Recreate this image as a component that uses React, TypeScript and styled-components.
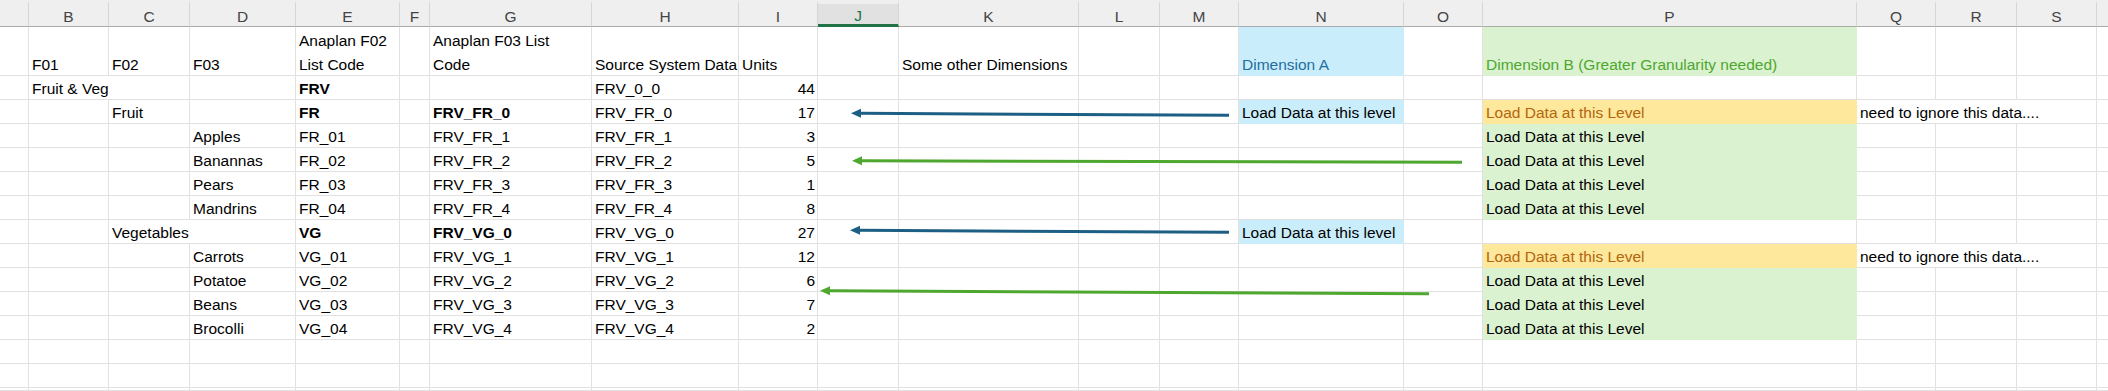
import React from "react";
import styled, { createGlobalStyle } from "styled-components";

const GlobalStyle = createGlobalStyle`
    html, body {
        margin: 0;
        padding: 0;
        background: #ffffff;
        overflow: hidden;
    }
    body {
        font-family: "Liberation Sans", Arial, sans-serif;
    }
`;

const GRID = "#E1E1E1";

const FILLS = {
    blue: "#CAEDFB",
    green: "#DAF2D0",
    yellow: "#FEE89B",
};

const TONES = {
    blue: "#1F6FA0",
    green: "#4EA72E",
    orange: "#B4650E",
};

type Fill = keyof typeof FILLS;
type Tone = keyof typeof TONES;

type CellSpec = {
    col: number;
    text?: string;
    lines?: string[];
    bold?: boolean;
    num?: boolean;
    fill?: Fill;
    tone?: Tone;
    span?: number;
};

const COLUMNS: { name: string; width: number }[] = [
    { name: "", width: 29 },
    { name: "B", width: 80 },
    { name: "C", width: 81 },
    { name: "D", width: 106 },
    { name: "E", width: 104 },
    { name: "F", width: 30 },
    { name: "G", width: 162 },
    { name: "H", width: 147 },
    { name: "I", width: 79 },
    { name: "J", width: 81 },
    { name: "K", width: 180 },
    { name: "L", width: 81 },
    { name: "M", width: 79 },
    { name: "N", width: 165 },
    { name: "O", width: 79 },
    { name: "P", width: 374 },
    { name: "Q", width: 79 },
    { name: "R", width: 81 },
    { name: "S", width: 80 },
    { name: "", width: 80 },
];

const SELECTED_COL = 9;

const loadLevel = (fill: Fill): CellSpec =>
    fill === "yellow"
        ? { col: 15, text: "Load Data at this Level", fill, tone: "orange" }
        : { col: 15, text: "Load Data at this Level", fill };

const ignore: CellSpec = { col: 16, text: "need to ignore this data....", span: 3 };
const loadA: CellSpec = { col: 13, text: "Load Data at this level", fill: "blue" };

const item = (name: string, code: string, listCode: string, units: number, extra: CellSpec[]): CellSpec[] => [
    { col: 3, text: name },
    { col: 4, text: code },
    { col: 6, text: listCode },
    { col: 7, text: listCode },
    { col: 8, text: String(units), num: true },
    ...extra,
];

const ROWS: CellSpec[][] = [
    [
        { col: 1, text: "F01" },
        { col: 2, text: "F02" },
        { col: 3, text: "F03" },
        { col: 4, lines: ["Anaplan F02", "List Code"] },
        { col: 6, lines: ["Anaplan F03 List", "Code"] },
        { col: 7, text: "Source System Data" },
        { col: 8, text: "Units" },
        { col: 10, text: "Some other Dimensions" },
        { col: 13, text: "Dimension A", fill: "blue", tone: "blue" },
        { col: 15, text: "Dimension B (Greater Granularity needed)", fill: "green", tone: "green" },
    ],
    [
        { col: 1, text: "Fruit & Veg", span: 2 },
        { col: 4, text: "FRV", bold: true },
        { col: 7, text: "FRV_0_0" },
        { col: 8, text: "44", num: true },
    ],
    [
        { col: 2, text: "Fruit" },
        { col: 4, text: "FR", bold: true },
        { col: 6, text: "FRV_FR_0", bold: true },
        { col: 7, text: "FRV_FR_0" },
        { col: 8, text: "17", num: true },
        loadA,
        loadLevel("yellow"),
        ignore,
    ],
    item("Apples", "FR_01", "FRV_FR_1", 3, [loadLevel("green")]),
    item("Banannas", "FR_02", "FRV_FR_2", 5, [loadLevel("green")]),
    item("Pears", "FR_03", "FRV_FR_3", 1, [loadLevel("green")]),
    item("Mandrins", "FR_04", "FRV_FR_4", 8, [loadLevel("green")]),
    [
        { col: 2, text: "Vegetables", span: 2 },
        { col: 4, text: "VG", bold: true },
        { col: 6, text: "FRV_VG_0", bold: true },
        { col: 7, text: "FRV_VG_0" },
        { col: 8, text: "27", num: true },
        loadA,
    ],
    item("Carrots", "VG_01", "FRV_VG_1", 12, [loadLevel("yellow"), ignore]),
    item("Potatoe", "VG_02", "FRV_VG_2", 6, [loadLevel("green")]),
    item("Beans", "VG_03", "FRV_VG_3", 7, [loadLevel("green")]),
    item("Brocolli", "VG_04", "FRV_VG_4", 2, [loadLevel("green")]),
    [],
    [],
    [],
];

const ARROWS = [
    { from: [1229, 115.3], to: [851, 113.3], color: "#1D5F84" },
    { from: [1462, 162.3], to: [852, 160.7], color: "#4EA72E" },
    { from: [1229, 232.3], to: [850, 230.3], color: "#1D5F84" },
    { from: [1429, 293.7], to: [820, 290.7], color: "#4EA72E" },
];

const SHEET_WIDTH = COLUMNS.reduce((s, c) => s + c.width, 0);
// the last row is cut by the bottom of the window, as in the screenshot
const SHEET_HEIGHT = 27 + 49 + (ROWS.length - 2) * 24 + 3;

const Viewport = styled.div`
    width: 2108px;
    height: 391px;
    overflow: hidden;
`;

const Sheet = styled.div`
    position: relative;
    display: grid;
    grid-template-columns: ${COLUMNS.map((c) => `${c.width}px`).join(" ")};
    grid-template-rows: 27px 49px repeat(${ROWS.length - 2}, 24px) 3px;
    width: ${SHEET_WIDTH}px;
    height: ${SHEET_HEIGHT}px;
    font-size: 15.5px;
    line-height: 18px;
    color: #000000;
`;

const ColumnHead = styled.div<{ $selected?: boolean }>`
    box-sizing: border-box;
    display: flex;
    align-items: flex-end;
    justify-content: center;
    background: ${(p) => (p.$selected ? "#E1E1E1" : "#EFEFEF")};
    border-top: 4px solid #efefef;
    border-right: 1px solid #d6d6d6;
    border-bottom: ${(p) => (p.$selected ? "3px solid #217346" : "1px solid #ABABAB")};
    color: ${(p) => (p.$selected ? "#217346" : "#444444")};
    line-height: ${(p) => (p.$selected ? "16px" : "18px")};
`;

const Cell = styled.div<{ $fill?: string; $span: number; $num?: boolean; $bold?: boolean; $tone?: string }>`
    grid-column: span ${(p) => p.$span};
    box-sizing: border-box;
    display: flex;
    align-items: flex-end;
    justify-content: ${(p) => (p.$num ? "flex-end" : "flex-start")};
    padding: 0 2px 1.5px 3px;
    background: ${(p) => p.$fill ?? "#ffffff"};
    border-right: 1px solid ${(p) => p.$fill ?? GRID};
    border-bottom: 1px solid ${(p) => p.$fill ?? GRID};
    font-weight: ${(p) => (p.$bold ? 700 : 400)};
    color: ${(p) => p.$tone ?? "#000000"};
    white-space: nowrap;
    overflow: hidden;
`;

const WrapText = styled.div`
    line-height: 24px;
    margin-bottom: -3.5px;
`;

const Overlay = styled.svg`
    position: absolute;
    left: 0;
    top: 0;
    pointer-events: none;
`;

const Arrow: React.FC<{ from: number[]; to: number[]; color: string }> = ({ from, to, color }) => {
    const dx = to[0] - from[0];
    const dy = to[1] - from[1];
    const len = Math.hypot(dx, dy);
    const ux = dx / len;
    const uy = dy / len;
    const head = 10;
    const half = 4.5;
    const bx = to[0] - ux * head;
    const by = to[1] - uy * head;
    const pts = [
        `${to[0]},${to[1]}`,
        `${bx - uy * half},${by + ux * half}`,
        `${bx + uy * half},${by - ux * half}`,
    ].join(" ");
    return (
        <g>
            <line x1={from[0]} y1={from[1]} x2={bx + ux} y2={by + uy} stroke={color} strokeWidth={3} />
            <polygon points={pts} fill={color} />
        </g>
    );
};

const renderRow = (specs: CellSpec[], r: number) => {
    const out: React.ReactNode[] = [];
    let c = 0;
    while (c < COLUMNS.length) {
        const spec = specs.find((s) => s.col === c);
        const span = spec?.span ?? 1;
        out.push(
            <Cell
                key={`${r}-${c}`}
                $span={span}
                $num={spec?.num}
                $bold={spec?.bold}
                $fill={spec?.fill ? FILLS[spec.fill] : undefined}
                $tone={spec?.tone ? TONES[spec.tone] : undefined}
            >
                {spec?.lines ? (
                    <WrapText>
                        {spec.lines.map((l) => (
                            <div key={l}>{l}</div>
                        ))}
                    </WrapText>
                ) : (
                    spec?.text
                )}
            </Cell>
        );
        c += span;
    }
    return out;
};

export default function App() {
    return (
        <>
            <GlobalStyle />
            <Viewport>
                <Sheet>
                    {COLUMNS.map((col, i) => (
                        <ColumnHead key={`h-${i}`} $selected={i === SELECTED_COL}>
                            {col.name}
                        </ColumnHead>
                    ))}
                    {ROWS.map((row, r) => renderRow(row, r))}
                    <Overlay width={SHEET_WIDTH} height={SHEET_HEIGHT} viewBox={`0 0 ${SHEET_WIDTH} ${SHEET_HEIGHT}`}>
                        {ARROWS.map((a, i) => (
                            <Arrow key={i} from={a.from} to={a.to} color={a.color} />
                        ))}
                    </Overlay>
                </Sheet>
            </Viewport>
        </>
    );
}
